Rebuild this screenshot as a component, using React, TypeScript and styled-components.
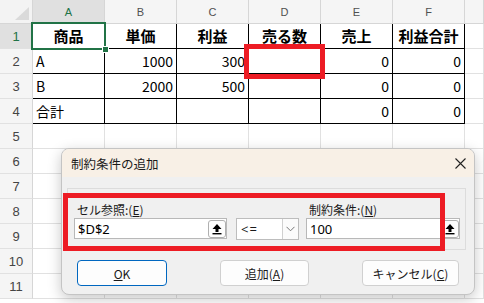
import { Fragment } from "react";
import styled, { createGlobalStyle } from "styled-components";

const GlobalStyle = createGlobalStyle`
  body {
    margin: 0;
    background: #ffffff;
    font-family: "Noto Sans CJK JP", "Noto Sans", sans-serif;
  }
`;

const Page = styled.div`
  position: relative;
  width: 484px;
  height: 303px;
  overflow: hidden;
  background: #ffffff;
`;

const Sheet = styled.div`
  display: grid;
  grid-template-columns: 33px repeat(6, 72px) 1fr;
  grid-template-rows: 24px repeat(11, 25px);
`;

const Corner = styled.div`
  position: relative;
  background: #f3f3f3;
  border-right: 1px solid #d6d6d6;
  border-bottom: 1px solid #d6d6d6;
  &::after {
    content: "";
    position: absolute;
    left: 15px;
    top: 7px;
    width: 14px;
    height: 13px;
    background: #dadada;
    clip-path: polygon(100% 0, 100% 100%, 0 100%);
  }
`;

const ColHead = styled.div<{ $sel?: boolean }>`
  display: flex;
  align-items: center;
  justify-content: center;
  background: ${(p) => (p.$sel ? "#e0e0e0" : "#f5f5f5")};
  color: ${(p) => (p.$sel ? "#217346" : "#505050")};
  font-family: "Liberation Sans", sans-serif;
  font-size: 11px;
  border-right: 1px solid #d6d6d6;
  border-bottom: 1px solid #d6d6d6;
`;

const RowNum = styled.div<{ $sel?: boolean }>`
  display: flex;
  align-items: center;
  justify-content: center;
  background: ${(p) => (p.$sel ? "#e0e0e0" : "#f5f5f5")};
  color: ${(p) => (p.$sel ? "#217346" : "#444444")};
  font-family: "Liberation Sans", sans-serif;
  font-size: 13px;
  border-right: 1px solid #d6d6d6;
  border-bottom: 1px solid #e1e1e1;
`;

const Cell = styled.div<{
  $boxed?: boolean;
  $align?: "left" | "right" | "center";
  $bold?: boolean;
}>`
  position: relative;
  display: flex;
  align-items: center;
  justify-content: ${(p) =>
    p.$align === "right" ? "flex-end" : p.$align === "center" ? "center" : "flex-start"};
  padding: 0 3px ${(p) => (p.$bold ? "2px" : "0")};
  box-sizing: border-box;
  font-size: ${(p) => (p.$bold ? "15px" : "14px")};
  font-weight: ${(p) => (p.$bold ? 700 : 400)};
  color: #000000;
  border-right: 1px solid ${(p) => (p.$boxed ? "#000000" : "#e1e1e1")};
  border-bottom: 1px solid ${(p) => (p.$boxed ? "#000000" : "#e1e1e1")};
`;

const Selection = styled.div`
  position: absolute;
  left: -2px;
  top: -2px;
  right: -2px;
  bottom: -2px;
  border: 2px solid #217346;
  z-index: 3;
  &::after {
    content: "";
    position: absolute;
    right: -5px;
    bottom: -5px;
    width: 5px;
    height: 5px;
    background: #217346;
    border: 1px solid #ffffff;
  }
`;

const Highlight = styled.div`
  position: absolute;
  left: -5px;
  top: -5px;
  right: -5px;
  bottom: -6px;
  border: 5px solid #ed1c24;
  z-index: 4;
`;

const Dialog = styled.div`
  position: absolute;
  left: 61px;
  top: 148px;
  width: 414px;
  height: 147px;
  box-sizing: border-box;
  border: 1px solid #c4c4c4;
  border-radius: 8px;
  overflow: hidden;
  background: #f0f0f0;
  box-shadow: 0 4px 14px rgba(0, 0, 0, 0.22);
  z-index: 10;
  color: #1a1a1a;
  font-size: 12px;
`;

const TitleBar = styled.div`
  display: flex;
  align-items: center;
  justify-content: space-between;
  height: 28px;
  padding: 0 8px 0 9px;
  background: #f8f0e6;
  font-size: 12.5px;
`;

const Body = styled.div`
  padding: 11px 8px 0 5px;
`;

const Group = styled.div`
  display: flex;
  align-items: flex-end;
  height: 62px;
  box-sizing: border-box;
  padding: 0 5px 10px 6px;
  border: 1px solid #dcdcdc;
`;

const Field = styled.div<{ $w: number; $ml?: number }>`
  display: flex;
  flex-direction: column;
  width: ${(p) => p.$w}px;
  margin-left: ${(p) => p.$ml ?? 0}px;
`;

const Label = styled.div`
  height: 17px;
  padding-left: 3px;
  font-size: 12px;
  line-height: 17px;
  u {
    text-decoration: underline;
    text-underline-offset: 1px;
  }
`;

const RefBox = styled.div`
  display: flex;
  align-items: center;
  height: 21px;
  box-sizing: border-box;
  background: #ffffff;
  border: 1px solid #b8b8b8;
`;

const RefText = styled.span`
  flex: 1;
  padding-left: 3px;
  font-size: 13px;
  font-family: "Noto Sans", sans-serif;
  color: #000000;
`;

const PickBtn = styled.div`
  display: flex;
  align-items: center;
  justify-content: center;
  width: 18px;
  height: 18px;
  box-sizing: border-box;
  background: #fdfdfd;
  border: 1px solid #b0b0b0;
  border-radius: 3px;
`;

const Select = styled.div`
  display: flex;
  height: 22px;
  box-sizing: border-box;
  background: #ffffff;
  border: 1px solid #bdbdbd;
  margin-bottom: -1px;
`;

const SelectText = styled.span`
  flex: 1;
  padding-left: 4px;
  font-size: 13px;
  line-height: 20px;
  font-family: "Noto Sans", sans-serif;
  letter-spacing: 1px;
`;

const SelectArrow = styled.div`
  display: flex;
  align-items: center;
  justify-content: center;
  width: 15px;
  border-left: 1px solid #d0d0d0;
  background: #fbfbfb;
`;

const Buttons = styled.div`
  display: flex;
  justify-content: space-between;
  padding: 10px 7px 0 10px;
`;

const Button = styled.div<{ $w: number; $primary?: boolean }>`
  display: flex;
  align-items: center;
  justify-content: center;
  width: ${(p) => p.$w}px;
  height: 26px;
  box-sizing: border-box;
  background: #fdfdfd;
  border: 1px solid ${(p) => (p.$primary ? "#0067c0" : "#d0d0d0")};
  border-radius: 4px;
  font-size: 12px;
  u {
    text-decoration: underline;
    text-underline-offset: 1px;
  }
`;

const Annotation = styled.div`
  position: absolute;
  left: 1px;
  top: 44px;
  width: 382px;
  height: 58px;
  box-sizing: border-box;
  border: 5px solid #ed1c24;
`;

const UpArrow = () => (
  <svg width="12" height="12" viewBox="0 0 12 12">
    <path d="M6 1 L10.5 6 L7.5 6 L7.5 9 L4.5 9 L4.5 6 L1.5 6 Z" fill="#000" />
    <rect x="1.5" y="10" width="9" height="1.4" fill="#000" />
  </svg>
);

const Chevron = () => (
  <svg width="9" height="6" viewBox="0 0 9 6">
    <polyline points="0.5,0.8 4.5,4.8 8.5,0.8" fill="none" stroke="#777" strokeWidth="1" />
  </svg>
);

const CloseIcon = () => (
  <svg width="11" height="11" viewBox="0 0 11 11">
    <path d="M0.5 0.5 L10.5 10.5 M10.5 0.5 L0.5 10.5" stroke="#222" strokeWidth="1.1" />
  </svg>
);

const cols = ["A", "B", "C", "D", "E", "F", ""];

type Row = [string, string, string, string, string, string];
const table: Row[] = [
  ["商品", "単価", "利益", "売る数", "売上", "利益合計"],
  ["A", "1000", "300", "", "0", "0"],
  ["B", "2000", "500", "", "0", "0"],
  ["合計", "", "", "", "0", "0"],
];

export default function App() {
  const rows = Array.from({ length: 11 }, (_, i) => i + 1);
  return (
    <Page>
      <GlobalStyle />
      <Sheet>
        <Corner />
        {cols.map((c, i) => (
          <ColHead key={i} $sel={c === "A"}>
            {c}
          </ColHead>
        ))}
        {rows.map((r) => (
          <Fragment key={r}>
            <RowNum $sel={r === 1}>{r}</RowNum>
            {cols.map((_, ci) => {
              const boxed = r <= 4 && ci < 6;
              const data = boxed ? table[r - 1][ci] : "";
              const isNum = /^[0-9]+$/.test(data);
              return (
                <Cell
                  key={ci}
                  $boxed={boxed}
                  $bold={r === 1 && boxed}
                  $align={r === 1 && boxed ? "center" : isNum ? "right" : "left"}
                >
                  {data}
                  {r === 1 && ci === 0 && <Selection />}
                  {r === 2 && ci === 3 && <Highlight />}
                </Cell>
              );
            })}
          </Fragment>
        ))}
      </Sheet>

      <Dialog>
        <TitleBar>
          <span>制約条件の追加</span>
          <CloseIcon />
        </TitleBar>
        <Body>
          <Group>
            <Field $w={153}>
              <Label>
                セル参照:(<u>E</u>)
              </Label>
              <RefBox>
                <RefText>$D$2</RefText>
                <PickBtn>
                  <UpArrow />
                </PickBtn>
              </RefBox>
            </Field>
            <Field $w={63} $ml={9}>
              <Select>
                <SelectText>&lt;=</SelectText>
                <SelectArrow>
                  <Chevron />
                </SelectArrow>
              </Select>
            </Field>
            <Field $w={154} $ml={7}>
              <Label>
                制約条件:(<u>N</u>)
              </Label>
              <RefBox>
                <RefText>100</RefText>
                <PickBtn>
                  <UpArrow />
                </PickBtn>
              </RefBox>
            </Field>
          </Group>
          <Buttons>
            <Button $w={90} $primary>
              <u>O</u>K
            </Button>
            <Button $w={89}>
              追加(<u>A</u>)
            </Button>
            <Button $w={97}>
              キャンセル(<u>C</u>)
            </Button>
          </Buttons>
        </Body>
        <Annotation />
      </Dialog>
    </Page>
  );
}
